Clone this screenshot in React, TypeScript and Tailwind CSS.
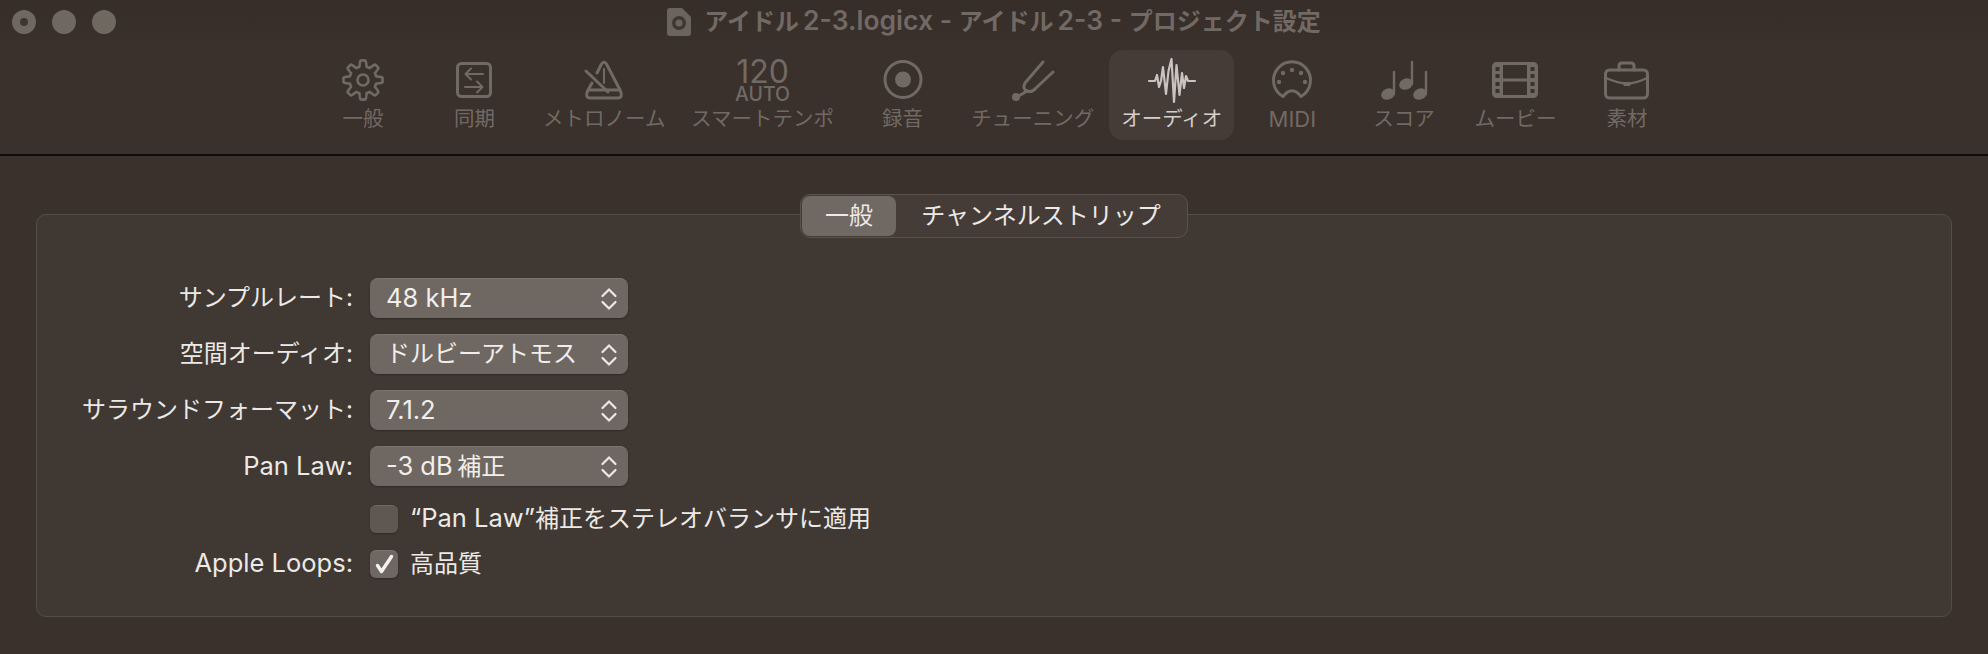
import type { ReactNode } from "react";

const INK = "#716a64";

// wavy outline for the gear, teeth are just a clipped cosine
const gearPath = (() => {
  const pts: string[] = [];
  for (let i = 0; i < 240; i++) {
    const a = (i / 240) * Math.PI * 2 + Math.PI / 8;
    const w = Math.max(-1, Math.min(1, Math.cos(8 * a) * 1.9));
    const r = 16.6 + w * 3;
    pts.push(`${(30 + r * Math.sin(a)).toFixed(2)} ${(22 - r * Math.cos(a)).toFixed(2)}`);
  }
  return `M${pts.join("L")}Z`;
})();

function Icon({ children }: { children: ReactNode }) {
  return (
    <svg
      width="60"
      height="46"
      viewBox="0 0 60 46"
      fill="none"
      stroke={INK}
      strokeWidth="3"
      strokeLinecap="round"
      strokeLinejoin="round"
    >
      {children}
    </svg>
  );
}

const GearIcon = () => (
  <Icon>
    <path d={gearPath} strokeWidth="2.6" />
    <circle cx="30" cy="22" r="5.5" strokeWidth="2.6" />
  </Icon>
);

const SyncIcon = () => (
  <Icon>
    <rect x="13.5" y="5.5" width="33" height="33" rx="4" />
    <path d="M39 16H22M27 10.5L21.5 16L27 21.5M21 29H38M33 23.5L38.5 29L33 34.5" strokeWidth="2" />
  </Icon>
);

const MetronomeIcon = () => (
  <Icon>
    <path d="M23 15L27.5 6Q30 2.5 32.5 6L46.5 33Q49 40 44 40H16Q11 40 13.5 33L18 25" />
    <path d="M15 32H45" />
    <path d="M12 13L34 34" />
    <path d="M30 11V25" strokeWidth="2" />
  </Icon>
);

const RecordIcon = () => (
  <Icon>
    <circle cx="30" cy="21.5" r="18" />
    <circle cx="30" cy="21.5" r="8" fill={INK} stroke="none" />
  </Icon>
);

const ForkIcon = () => (
  <Icon>
    <path d="M40 4L22 25Q19 31 24 33Q29 35 33 30L50 14" />
    <path d="M24 33L14 39" />
    <circle cx="13" cy="39" r="4" fill={INK} stroke="none" />
  </Icon>
);

const WaveIcon = () => (
  <svg width="60" height="46" viewBox="0 0 60 46" fill="none" stroke="#c9c4bf" strokeWidth="2.2" strokeLinejoin="round" strokeLinecap="round">
    <path d="M7 23H13L15 17L17 29L19 23L21 9L24 36L26.5 13L29.5 1L32 44L34.5 7L37.5 37L40 15L42 30L44 18L46 23H53" />
  </svg>
);

const MidiIcon = () => (
  <Icon>
    <path d="M21 38.5A18.5 18.5 0 1 1 39 38.5Q30 27 21 38.5Z" />
    <g fill={INK} stroke="none">
      <circle cx="30" cy="12" r="2.2" />
      <circle cx="21" cy="15" r="2.2" />
      <circle cx="39" cy="15" r="2.2" />
      <circle cx="17" cy="24" r="2.2" />
      <circle cx="43" cy="24" r="2.2" />
    </g>
  </Icon>
);

const ScoreIcon = () => (
  <Icon>
    <g fill={INK} stroke="none">
      <ellipse cx="14" cy="36" rx="7" ry="5.5" transform="rotate(-25 14 36)" />
      <ellipse cx="32" cy="26" rx="7" ry="5.5" transform="rotate(-25 32 26)" />
      <ellipse cx="46" cy="36" rx="7" ry="5.5" transform="rotate(-25 46 36)" />
    </g>
    <path d="M20 14V36M38 4V26M52 14V36" strokeWidth="2.4" />
  </Icon>
);

const FilmIcon = () => (
  <Icon>
    <rect x="7.5" y="5.5" width="43" height="33" rx="3" />
    <path d="M15.5 6V38M42.5 6V38M16 22H42" />
    <g fill={INK} stroke="none">
      <path d="M8 6H15V38H8ZM43 6H50V38H43Z" />
    </g>
    <g fill="#3a302c" stroke="none">
      <rect x="9.5" y="9" width="4" height="4" />
      <rect x="9.5" y="16" width="4" height="4" />
      <rect x="9.5" y="24" width="4" height="4" />
      <rect x="9.5" y="31" width="4" height="4" />
      <rect x="44.5" y="9" width="4" height="4" />
      <rect x="44.5" y="16" width="4" height="4" />
      <rect x="44.5" y="24" width="4" height="4" />
      <rect x="44.5" y="31" width="4" height="4" />
    </g>
  </Icon>
);

const CaseIcon = () => (
  <Icon>
    <rect x="8.5" y="12" width="42" height="28" rx="4" />
    <path d="M22 12V8Q22 5 25 5H34Q37 5 37 8V12" />
    <path d="M9 20C18 24 24 25.5 30 25.5C36 25.5 42 24 50 20" strokeWidth="2.4" />
    <rect x="26.5" y="24" width="7" height="4" rx="1" fill={INK} stroke="none" />
  </Icon>
);

const TempoIcon = () => (
  <div className="flex h-[46px] flex-col items-center justify-start text-[#716a64]">
    <span className="text-[32px] leading-[27px] font-normal">120</span>
    <span className="text-[19.5px] leading-[19px] font-medium">AUTO</span>
  </div>
);

const toolbar: { label: string; icon: ReactNode; active?: boolean }[] = [
  { label: "一般", icon: <GearIcon /> },
  { label: "同期", icon: <SyncIcon /> },
  { label: "メトロノーム", icon: <MetronomeIcon /> },
  { label: "スマートテンポ", icon: <TempoIcon /> },
  { label: "録音", icon: <RecordIcon /> },
  { label: "チューニング", icon: <ForkIcon /> },
  { label: "オーディオ", icon: <WaveIcon />, active: true },
  { label: "MIDI", icon: <MidiIcon /> },
  { label: "スコア", icon: <ScoreIcon /> },
  { label: "ムービー", icon: <FilmIcon /> },
  { label: "素材", icon: <CaseIcon /> },
];

function ToolbarItem({ label, icon, active }: { label: string; icon: ReactNode; active?: boolean }) {
  return (
    <div
      className={
        active
          ? "flex h-[90px] min-w-[125px] flex-col items-center rounded-[14px] bg-[#453c38] px-[10.5px] pt-[8px] text-[#d3cfcb]"
          : "flex h-[90px] min-w-[107px] flex-col items-center rounded-[14px] px-[10.5px] pt-[8px] text-[#716a64]"
      }
    >
      {icon}
      <span
        className={
          label === "MIDI"
            ? "mt-[3px] text-[22px] leading-[24px] whitespace-nowrap"
            : "mt-[3px] text-[20.5px] leading-[24px] whitespace-nowrap"
        }
      >
        {label}
      </span>
    </div>
  );
}

// latin runs are set a bit larger, SF is wider than Inter next to the kana
const Latin = ({ children }: { children: ReactNode }) => <span className="text-[25.5px]">{children}</span>;

function Select({ value }: { value: ReactNode }) {
  return (
    <div className="flex h-[40px] w-[258px] items-center justify-between rounded-[8px] border-t border-[#7b746e] bg-[#6f6862] pr-[10px] pl-[16px] text-[24px] leading-none text-[#f1eeeb] shadow-[0_1px_2px_rgba(0,0,0,0.25)]">
      <span className="pb-[2px] whitespace-nowrap">{value}</span>
      <svg width="18" height="24" viewBox="0 0 18 24" fill="none" stroke="#ece9e6" strokeWidth="2.2" strokeLinecap="round" strokeLinejoin="round">
        <path d="M2.5 9L9 2.5L15.5 9M2.5 15L9 21.5L15.5 15" />
      </svg>
    </div>
  );
}

function Row({ label, children, className }: { label?: ReactNode; children: ReactNode; className?: string }) {
  return (
    <div className={`flex items-center leading-[28px] ${className ?? ""}`}>
      <div className="w-[316px] text-right text-[24px] whitespace-nowrap text-[#ece9e6]">{label}</div>
      <div className="ml-[17px] flex items-center">{children}</div>
    </div>
  );
}

function Checkbox({ checked, label }: { checked?: boolean; label: ReactNode }) {
  return (
    <>
      <span
        className={
          checked
            ? "flex h-[28px] w-[28px] items-center justify-center rounded-[6px] border-t border-[#7b746e] bg-[#6f6862] shadow-[0_1px_2px_rgba(0,0,0,0.25)]"
            : "flex h-[28px] w-[28px] items-center justify-center rounded-[6px] border-t border-[#6d6661] bg-[#5f5852] shadow-[0_1px_2px_rgba(0,0,0,0.25)]"
        }
      >
        {checked && (
          <svg width="28" height="28" viewBox="0 0 28 28" fill="none" stroke="#f4f2f0" strokeWidth="3.4" strokeLinecap="round" strokeLinejoin="round">
            <path d="M7.5 15.5L11.5 21.5L21.5 6.5" />
          </svg>
        )}
      </span>
      <span className="ml-[12px] text-[24px] whitespace-nowrap text-[#ece9e6]">{label}</span>
    </>
  );
}

export default function App() {
  return (
    <div className="flex h-[654px] w-[1988px] flex-col overflow-hidden bg-[#3a302c] font-[Inter,'Noto_Sans_CJK_JP',sans-serif]">
      {/* Title bar */}
      <div className="grid h-[44px] shrink-0 grid-cols-[1fr_auto_1fr] items-center bg-gradient-to-b from-[#362c28] to-[#3a302c]">
        <div className="flex items-center gap-[16px] pl-[12px]">
          <span className="flex h-[24px] w-[24px] items-center justify-center rounded-full bg-[#6f6860]">
            <span className="h-[8px] w-[8px] rounded-full bg-[#3f3632]" />
          </span>
          <span className="h-[24px] w-[24px] rounded-full bg-[#6f6860]" />
          <span className="h-[24px] w-[24px] rounded-full bg-[#6f6860]" />
        </div>
        <div className="flex items-center gap-[13px]">
          <svg width="24" height="28" viewBox="0 0 24 28">
            <path d="M3 0H15L24 9V25Q24 28 21 28H3Q0 28 0 25V3Q0 0 3 0Z" fill="#6b645e" />
            <circle cx="12" cy="15" r="7" fill="#3f3632" />
            <circle cx="12" cy="15" r="3.5" fill="#6b645e" />
          </svg>
          <span className="pb-[2px] text-[24px] leading-[30px] font-semibold whitespace-nowrap text-[#716a64]">
            {"アイドル\u2009"}
            <span className="text-[26.5px]">2-3.logicx - </span>
            {"アイドル\u2009"}
            <span className="text-[26.5px]">2-3 - </span>
            プロジェクト設定
          </span>
        </div>
        <div />
      </div>

      {/* Toolbar */}
      <div className="flex h-[112px] shrink-0 justify-center gap-[4.6px] border-b-2 border-[#0f0b0a] pt-[6px] pl-[2px]">
        {toolbar.map((item) => (
          <ToolbarItem key={item.label} {...item} />
        ))}
      </div>

      {/* Panel */}
      <div className="px-[36px] pt-[58px]">
        <div className="w-[1916px] rounded-[10px] border border-[#554c47] bg-[#3f3833] pb-[38px]">
          <div className="mx-auto -mt-[21px] flex h-[44px] w-[388px] items-center rounded-[10px] border border-[#5a514c] bg-[#453c37] p-[1px] text-[24px] text-[#ece9e6]">
            <div className="flex h-[40px] w-[94px] items-center justify-center rounded-[8px] bg-[#6f6863]">一般</div>
            <div className="flex-1 text-center whitespace-nowrap">チャンネルストリップ</div>
          </div>
          <div className="mt-[40px] flex flex-col">
            <Row label="サンプルレート:">
              <Select value={<Latin>48 kHz</Latin>} />
            </Row>
            <Row label="空間オーディオ:" className="mt-[16px]">
              <Select value="ドルビーアトモス" />
            </Row>
            <Row label="サラウンドフォーマット:" className="mt-[16px]">
              <Select value={<Latin>7.1.2</Latin>} />
            </Row>
            <Row label={<Latin>Pan Law:</Latin>} className="mt-[16px]">
              <Select
                value={
                  <>
                    <Latin>{"-3 dB\u2009"}</Latin>補正
                  </>
                }
              />
            </Row>
            <Row className="mt-[18px]">
              <Checkbox
                label={
                  <>
                    <Latin>“Pan Law”</Latin>補正をステレオバランサに適用
                  </>
                }
              />
            </Row>
            <Row label={<Latin>Apple Loops:</Latin>} className="mt-[16px]">
              <Checkbox checked label="高品質" />
            </Row>
          </div>
        </div>
      </div>
    </div>
  );
}
